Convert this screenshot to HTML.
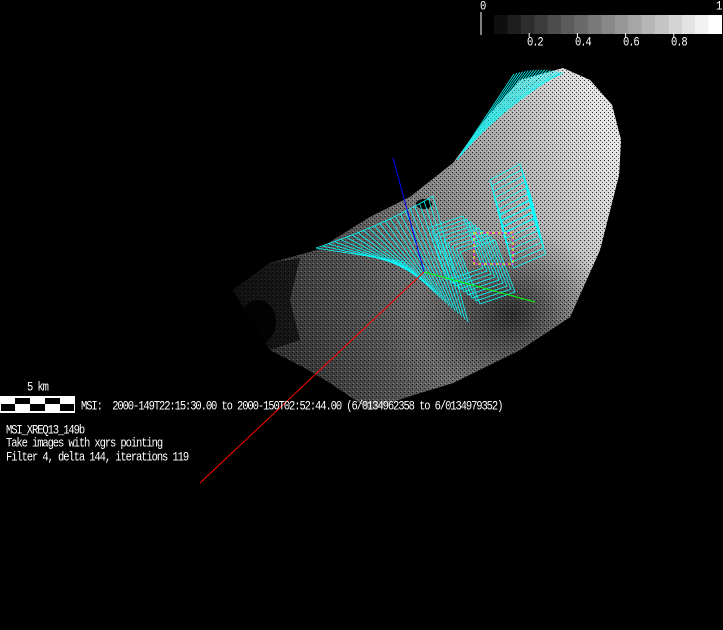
<!DOCTYPE html>
<html><head><meta charset="utf-8"><style>
html,body{margin:0;padding:0;background:#000;width:723px;height:630px;overflow:hidden}
.t{position:absolute;font-family:"Liberation Mono",monospace;font-size:10.5px;letter-spacing:-1.1px;color:#fff;white-space:pre;line-height:13px;transform:scaleY(1.2);transform-origin:0 0}
</style></head><body>
<svg id="s" width="723" height="630" style="position:absolute;left:0;top:0">
<defs>
<linearGradient id="g" x1="0" y1="0.6" x2="1" y2="0.3">
<stop offset="0" stop-color="#2a2a2a"/><stop offset="0.3" stop-color="#555"/><stop offset="0.55" stop-color="#888"/><stop offset="0.8" stop-color="#bbb"/><stop offset="1" stop-color="#e4e4e4"/>
</linearGradient>
<radialGradient id="d" cx="0.72" cy="0.72" r="0.25">
<stop offset="0" stop-color="#111" stop-opacity="0.8"/><stop offset="1" stop-color="#111" stop-opacity="0"/>
</radialGradient>
<pattern id="p" width="4" height="4" patternUnits="userSpaceOnUse"><rect x="0" y="0" width="1" height="1" fill="#000" opacity="0.8"/><rect x="2" y="2" width="1" height="1" fill="#000" opacity="0.6"/><rect x="1" y="3" width="1" height="1" fill="#fff" opacity="0.3"/></pattern>
</defs>
<path id="b" d="M563,68 L590,80 L612,105 L621,140 L619,175 L600,250 L570,317 L520,350 L453,383 L407,397 L370,410 L330,383 L303,367 L270,350 L233,290 L270,263 L317,250 L370,217 L410,197 L453,163 L487,117 L520,80 Z" fill="url(#g)"/>
<use href="#b" fill="url(#d)"/>
<path d="M563,68 L590,80 L612,105 L621,140 L619,175 L600,250 L570,317 L520,350 L453,383 L407,397 L370,410 L330,383 L303,367 L270,350 L233,290 L270,263 L317,250 L370,217 L410,197 L453,163 L487,117 L520,80 Z" fill="url(#d)"/>
<path d="M563,68 L590,80 L612,105 L621,140 L619,175 L600,250 L570,317 L520,350 L453,383 L407,397 L370,410 L330,383 L303,367 L270,350 L233,290 L270,263 L317,250 L370,217 L410,197 L453,163 L487,117 L520,80 Z" fill="url(#p)"/>
<path d="M233,290 L270,263 L300,258 L290,300 L300,340 L270,350 Z" fill="#000" opacity="0.6"/>
<ellipse cx="258" cy="322" rx="18" ry="22" fill="#000" opacity="0.85"/>
<ellipse cx="424" cy="204" rx="8" ry="5" fill="#000"/>
<g id="c" stroke="#0ff" stroke-width="0.8" fill="none"></g>
<rect x="474" y="233" width="39" height="31" fill="none" stroke="#ff0" stroke-dasharray="3,3"/>
<rect x="474" y="233" width="39" height="31" fill="none" stroke="#f0f" stroke-dasharray="3,3" stroke-dashoffset="3"/>
<line x1="393" y1="158" x2="424" y2="272" stroke="#00f"/>
<line x1="200" y1="483" x2="424" y2="272" stroke="#f00"/>
<line x1="424" y1="272" x2="535" y2="302" stroke="#0f0"/>
<g id="cb"></g>
<line x1="481" y1="12" x2="481" y2="35" stroke="#fff"/>
<rect x="0" y="396" width="75" height="17" fill="#fff"/>
<g fill="#000"><rect x="15" y="398" width="15" height="6"/><rect x="45" y="398" width="15" height="6"/><rect x="1" y="404" width="14" height="7"/><rect x="30" y="404" width="15" height="7"/><rect x="60" y="404" width="14" height="7"/></g>
</svg>
<div class="t" style="left:480px;top:0px">0</div>
<div class="t" style="left:716px;top:0px">1</div>
<div class="t" style="left:527px;top:36px">0.2</div>
<div class="t" style="left:575px;top:36px">0.4</div>
<div class="t" style="left:623px;top:36px">0.6</div>
<div class="t" style="left:671px;top:36px">0.8</div>
<div class="t" style="left:27px;top:381px">5 km</div>
<div class="t" style="left:81px;top:400px">MSI:  2000-149T22:15:30.00 to 2000-150T02:52:44.00 (6/0134962358 to 6/0134979352)</div>
<div class="t" style="left:6px;top:424px">MSI_XREQ13_149b</div>
<div class="t" style="left:6px;top:437px">Take images with xgrs pointing</div>
<div class="t" style="left:6px;top:451px">Filter 4, delta 144, iterations 119</div>
<script>
var ns="http://www.w3.org/2000/svg",c=document.getElementById("c"),cb=document.getElementById("cb");
function L(a,b,d,e){var l=document.createElementNS(ns,"line");l.setAttribute("x1",a);l.setAttribute("y1",b);l.setAttribute("x2",d);l.setAttribute("y2",e);c.appendChild(l);}
function q(p0,p1,p2,t){return[(1-t)*(1-t)*p0[0]+2*(1-t)*t*p1[0]+t*t*p2[0],(1-t)*(1-t)*p0[1]+2*(1-t)*t*p1[1]+t*t*p2[1]];}
for(var i=0;i<=18;i++){var t=i/18;var a=q([514,74],[540,66],[563,73],t),b=q([457,160],[495,115],[552,78],t);L(a[0],a[1],b[0],b[1]);}
var pa=[];for(var i=0;i<=30;i++){pa.push(q([316,248],[385,225],[433,196],i/30));}
var pl=document.createElementNS(ns,"polyline");pl.setAttribute("points",pa.map(function(p){return p.join(",")}).join(" "));c.appendChild(pl);
for(var i=0;i<=22;i++){var t=i/22;var a=q([316,248],[385,225],[433,196],t),b=q([405,262],[432,292],[468,322],t);L(a[0],a[1],b[0],b[1]);}
for(var i=0;i<9;i++){var x=428+i*4,y=228+i*3;var p=document.createElementNS(ns,"polygon");c.appendChild(p);p.setAttribute("points",(x)+","+(y)+" "+(x+35)+","+(y-12)+" "+(x+55)+","+(y+40)+" "+(x+20)+","+(y+52));}
for(var i=0;i<10;i++){var x=490+i*1.5,y=172+i*6;var p=document.createElementNS(ns,"polygon");c.appendChild(p);p.setAttribute("points",x+","+(y+8)+" "+(x+30)+","+(y-8)+" "+(x+42)+","+(y+28)+" "+(x+10)+","+(y+42));}
for(var i=0;i<17;i++){var v=Math.round(i/16*255*0.95+15);var r=document.createElementNS(ns,"rect");r.setAttribute("x",494+i*13.4);r.setAttribute("y",15);r.setAttribute("width",13.6);r.setAttribute("height",19);r.setAttribute("fill","rgb("+v+","+v+","+v+")");cb.appendChild(r);}
[0.2,0.4,0.6,0.8].forEach(function(v){var x=481+v*241;var l=document.createElementNS(ns,"line");l.setAttribute("x1",x);l.setAttribute("x2",x);l.setAttribute("y1",33);l.setAttribute("y2",37);l.setAttribute("stroke","#fff");cb.appendChild(l);});
</script>
</body></html>
